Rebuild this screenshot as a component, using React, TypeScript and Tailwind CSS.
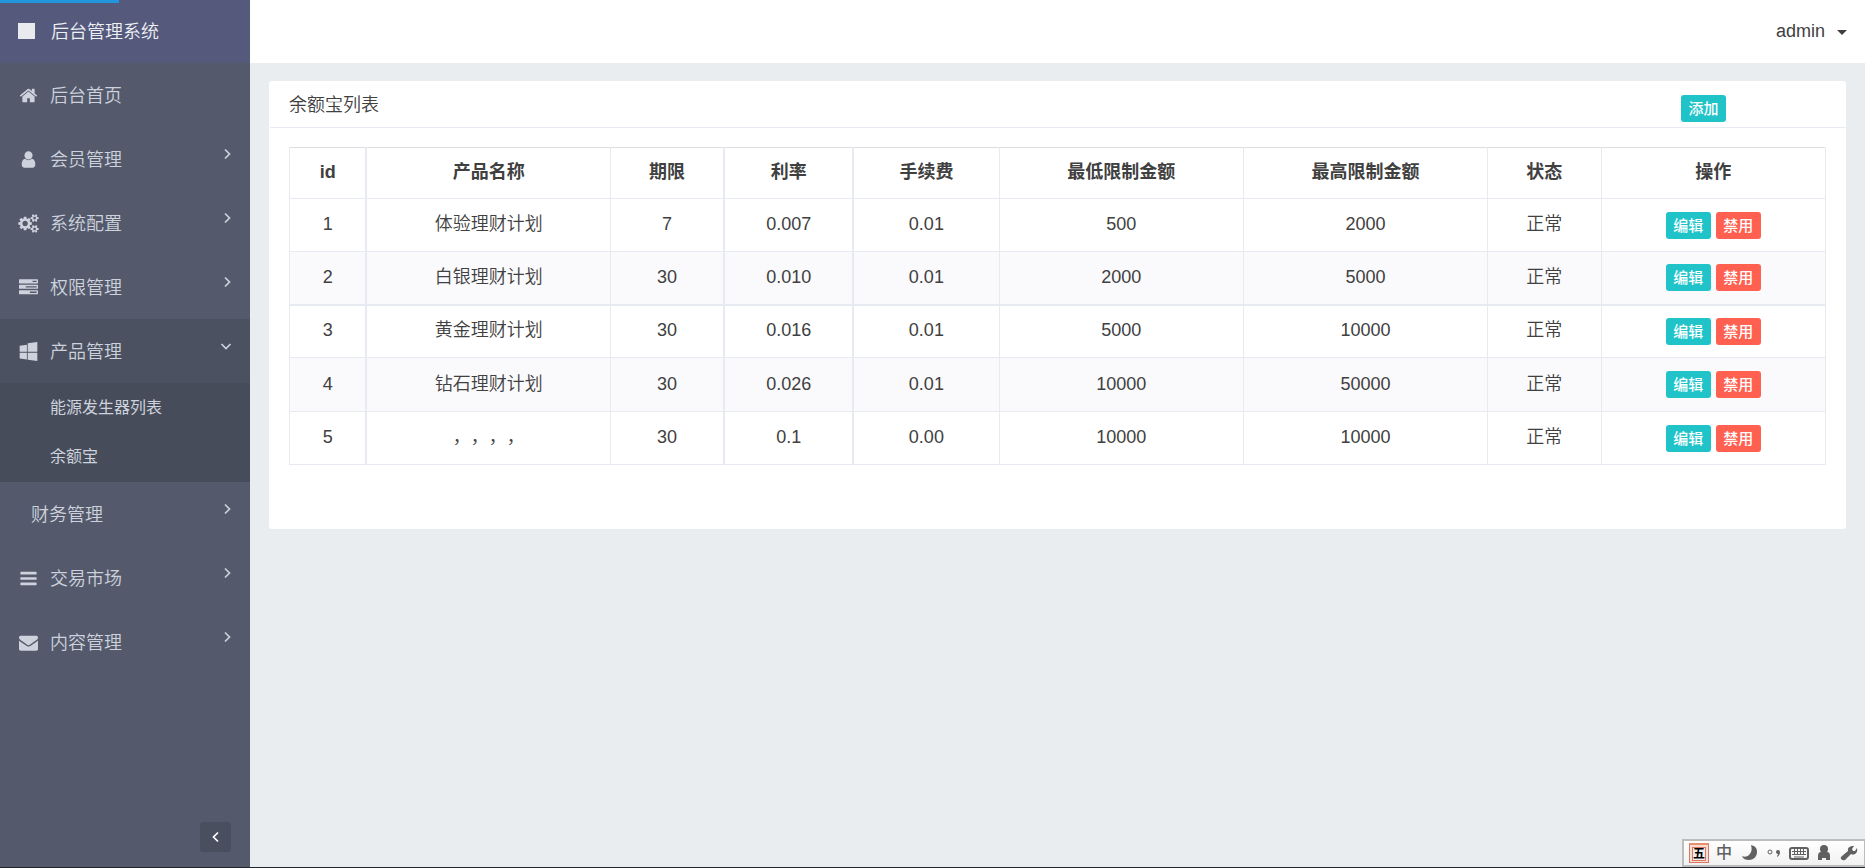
import React, { useState } from "react";

const ICONS = {
  home: "M1472 992v480q0 26-19 45t-45 19h-384v-384h-256v384h-384q-26 0-45-19t-19-45v-480q0-1 .5-3t.5-3l575-474 575 474q1 2 1 6zm223-69l-62 74q-8 9-21 11h-3q-13 0-21-7l-692-577-692 577q-12 8-24 7-13-2-21-11l-62-74q-8-10-7-23.5t11-21.5l719-599q32-26 76-26t76 26l244 204v-195q0-14 9-23t23-9h192q14 0 23 9t9 23v408l219 182q10 8 11 21.5t-7 23.5z",
  user: "M1536 1399q0 109-62.5 187t-150.5 78h-854q-88 0-150.5-78t-62.5-187q0-85 8.5-160.5t31.5-152 58.5-131 94-89 134.5-34.5q131 128 313 128t313-128q76 0 134.5 34.5t94 89 58.5 131 31.5 152 8.5 160.5zm-256-887q0 159-112.5 271.5t-271.5 112.5-271.5-112.5-112.5-271.5 112.5-271.5 271.5-112.5 271.5 112.5 112.5 271.5z",
  cogs: "M832 896q0-106-75-181t-181-75-181 75-75 181 75 181 181 75 181-75 75-181zm768 512q0-52-38-90t-90-38-90 38-38 90q0 53 37.5 90.5t90.5 37.5 90.5-37.5 37.5-90.5zm0-1024q0-52-38-90t-90-38-90 38-38 90q0 53 37.5 90.5t90.5 37.5 90.5-37.5 37.5-90.5zm-384 421v185q0 10-7 19.5t-16 10.5l-155 24q-11 35-32 76 34 48 90 115 7 11 7 20 0 12-7 19-23 30-82.5 89.5t-78.5 59.5q-11 0-21-7l-115-90q-37 19-77 31-11 108-23 155-7 24-30 24h-186q-11 0-20-7.5t-10-17.5l-23-153q-34-10-75-31l-118 89q-7 7-20 7-11 0-21-8-144-133-144-160 0-9 7-19 10-14 41-53t47-61q-23-44-35-82l-152-24q-10-1-17-9.5t-7-19.5v-185q0-10 7-19.5t16-10.5l155-24q11-35 32-76-34-48-90-115-7-11-7-20 0-12 7-20 22-30 82-89t79-59q11 0 21 7l115 90q34-18 77-32 11-108 23-154 7-24 30-24h186q11 0 20 7.5t10 17.5l23 153q34 10 75 31l118-89q8-7 20-7 11 0 21 8 144 133 144 160 0 8-7 19-12 16-42 54t-45 60q23 48 34 82l152 23q10 2 17 10.5t7 19.5zm640 533v140q0 16-149 31-12 27-30 52 51 113 51 138 0 4-4 7-122 71-124 71-8 0-46-47t-52-68q-20 2-30 2t-30-2q-14 21-52 68t-46 47q-2 0-124-71-4-3-4-7 0-25 51-138-18-25-30-52-149-15-149-31v-140q0-16 149-31 13-29 30-52-51-113-51-138 0-4 4-7 4-2 35-20t59-34 30-16q8 0 46 46.5t52 67.5q20-2 30-2t30 2q51-71 92-112l6-2q4 0 124 70 4 3 4 7 0 25-51 138 17 23 30 52 149 15 149 31zm0-1024v140q0 16-149 31-12 27-30 52 51 113 51 138 0 4-4 7-122 71-124 71-8 0-46-47t-52-68q-20 2-30 2t-30-2q-14 21-52 68t-46 47q-2 0-124-71-4-3-4-7 0-25 51-138-18-25-30-52-149-15-149-31v-140q0-16 149-31 13-29 30-52-51-113-51-138 0-4 4-7 4-2 35-20t59-34 30-16q8 0 46 46.5t52 67.5q20-2 30-2t30 2q51-71 92-112l6-2q4 0 124 70 4 3 4 7 0 25-51 138 17 23 30 52 149 15 149 31z",
  tasks: "M1024 1408h640v-128h-640v128zm-384-512h1024v-128h-1024v128zm640-512h384v-128h-384v128zm512 832v256q0 26-19 45t-45 19h-1664q-26 0-45-19t-19-45v-256q0-26 19-45t45-19h1664q26 0 45 19t19 45zm0-512v256q0 26-19 45t-45 19h-1664q-26 0-45-19t-19-45v-256q0-26 19-45t45-19h1664q26 0 45 19t19 45zm0-512v256q0 26-19 45t-45 19h-1664q-26 0-45-19t-19-45v-256q0-26 19-45t45-19h1664q26 0 45 19t19 45z",
  windows: "M746 1006v651l-682-94v-557h682zm0-743v659h-682v-565zm982 743v786l-907-125v-661h907zm0-1006v922h-907v-797z",
  bars: "M1664 1344v128q0 26-19 45t-45 19h-1408q-26 0-45-19t-19-45v-128q0-26 19-45t45-19h1408q26 0 45 19t19 45zm0-512v128q0 26-19 45t-45 19h-1408q-26 0-45-19t-19-45v-128q0-26 19-45t45-19h1408q26 0 45 19t19 45zm0-512v128q0 26-19 45t-45 19h-1408q-26 0-45-19t-19-45v-128q0-26 19-45t45-19h1408q26 0 45 19t19 45z",
  envelope: "M1792 710v794q0 66-47 113t-113 47h-1472q-66 0-113-47t-47-113v-794q44 49 101 87 362 246 497 345 57 42 92.5 65.5t94.5 48 110 24.5h2q51 0 110-24.5t94.5-48 92.5-65.5q170-123 498-345 57-39 100-87zm0-294q0 79-49 151t-122 123q-376 261-468 325-10 7-42.5 31t-54 38.5-52 32.5-57.5 27-50 9h-2q-23 0-50-9t-57.5-27-52-32.5-54-38.5-42.5-31q-91-64-262-182.5t-205-142.5q-62-42-117-115.5t-55-136.5q0-78 41.5-130t118.5-52h1472q65 0 112.5 47t47.5 113z",
};

type IconName = keyof typeof ICONS;

type MenuItem = {
  label: string;
  icon?: IconName;
  link?: boolean;
  children?: string[];
};

const menu: MenuItem[] = [
  { label: "后台首页", icon: "home", link: true },
  { label: "会员管理", icon: "user" },
  { label: "系统配置", icon: "cogs" },
  { label: "权限管理", icon: "tasks" },
  {
    label: "产品管理",
    icon: "windows",
    children: ["能源发生器列表", "余额宝"],
  },
  { label: "财务管理" },
  { label: "交易市场", icon: "bars" },
  { label: "内容管理", icon: "envelope" },
];

const columns = [
  { title: "id", style: "w-[5%] border-r-2" },
  { title: "产品名称", style: "w-[15.9%]" },
  { title: "期限", style: "w-[7.4%] border-r-2" },
  { title: "利率", style: "w-[8.4%] border-r-2" },
  { title: "手续费", style: "w-[9.5%]" },
  { title: "最低限制金额", style: "w-[15.9%]" },
  { title: "最高限制金额", style: "w-[15.9%]" },
  { title: "状态", style: "w-[7.4%]" },
  { title: "操作", style: "w-[14.6%]" },
];

const products = [
  ["1", "体验理财计划", "7", "0.007", "0.01", "500", "2000", "正常"],
  ["2", "白银理财计划", "30", "0.010", "0.01", "2000", "5000", "正常"],
  ["3", "黄金理财计划", "30", "0.016", "0.01", "5000", "10000", "正常"],
  ["4", "钻石理财计划", "30", "0.026", "0.01", "10000", "50000", "正常"],
  ["5", "，，，，", "30", "0.1", "0.00", "10000", "10000", "正常"],
];

function Icon({ name }: { name: IconName }) {
  return (
    <svg
      viewBox="0 0 1792 1792"
      className="h-[19px] w-[19px] shrink-0 overflow-visible"
      fill="currentColor"
      aria-hidden="true"
    >
      <path d={ICONS[name]} />
    </svg>
  );
}

function Angle({ dir }: { dir: "left" | "right" | "down" }) {
  const points = {
    left: "8,1.500 3.500,6 8,10.500",
    right: "5,1.500 9.500,6 5,10.500",
    down: "1.500,4 6,8.500 10.500,4",
  };
  return (
    <svg
      viewBox="0 0 12 12"
      className="h-3 w-3"
      fill="none"
      stroke="currentColor"
      strokeWidth="1.700"
      aria-hidden="true"
    >
      <polyline points={points[dir]} />
    </svg>
  );
}

function SmallButton({ label, danger }: { label: string; danger?: boolean }) {
  return (
    <button
      type="button"
      className={`h-[27px] w-[45px] rounded-[3px] text-[15px] leading-[27px] font-medium text-white ${
        danger ? "bg-[#ff6050]" : "bg-[#1fc3c8]"
      }`}
    >
      {label}
    </button>
  );
}

function Sidebar() {
  const [open, setOpen] = useState("产品管理");

  return (
    <aside className="flex w-[250px] shrink-0 flex-col bg-[#545a6c] text-[#cdd2dc]">
      <div className="h-[63px] bg-[#555a7c]">
        {/* Page loading progress */}
        <div className="h-[3px] w-[119px] bg-[#2196dc]"></div>
        <a
          href="#"
          className="flex h-14 items-center gap-4 pl-[18px] text-lg text-[#eef0f4]"
        >
          <span className="h-4 w-[17px] bg-[#e9eaee]"></span>
          <span className="pt-0.5">后台管理系统</span>
        </a>
      </div>

      <nav>
        <ul>
          {menu.map((item) => {
            const isOpen = open === item.label && !!item.children;
            const rowClass = `flex h-16 w-full items-center gap-3 pr-[18px] text-lg ${
              item.icon ? "pl-[19px]" : "pl-[31px]"
            } ${isOpen ? "bg-[#4c5161]" : ""}`;
            return (
              <li key={item.label}>
                {item.link ? (
                  <a href="#" className={rowClass}>
                    {item.icon && <Icon name={item.icon} />}
                    <span className="pt-0.5">{item.label}</span>
                  </a>
                ) : (
                  <button
                    type="button"
                    aria-expanded={isOpen}
                    onClick={() => setOpen(isOpen ? "" : item.label)}
                    className={rowClass}
                  >
                    {item.icon && <Icon name={item.icon} />}
                    <span className="pt-0.5">{item.label}</span>
                    <span className="mb-2.5 ml-auto">
                      <Angle dir={isOpen ? "down" : "right"} />
                    </span>
                  </button>
                )}
                {isOpen && (
                  <ul className="bg-[#474c5b] pb-px">
                    {item.children?.map((child) => (
                      <li key={child}>
                        <a
                          href="#"
                          className="flex h-[49px] items-center pl-[50px] text-base font-normal"
                        >
                          {child}
                        </a>
                      </li>
                    ))}
                  </ul>
                )}
              </li>
            );
          })}
        </ul>
      </nav>

      <button
        type="button"
        aria-label="收起菜单"
        className="mt-auto mr-[19px] mb-[15px] flex h-[30px] w-[31px] items-center justify-center self-end rounded-[3px] bg-[#4a4f60] text-white"
      >
        <Angle dir="left" />
      </button>
    </aside>
  );
}

function ProductTable() {
  return (
    <table className="w-full table-fixed border-collapse border border-[#e7ebf1] text-center text-lg">
      <thead>
        <tr className="h-[51px] border-t border-t-[#dcdee2]">
          {columns.map((column) => (
            <th
              key={column.title}
              className={`border-x border-b border-[#e7ebf1] pb-0.5 font-bold ${column.style}`}
            >
              {column.title}
            </th>
          ))}
        </tr>
      </thead>
      <tbody>
        {products.map((row) => (
          <tr
            key={row[0]}
            className="h-[53px] even:bg-[#fafafc] nth-[2]:border-b-2 nth-[2]:border-[#e7ebf1] nth-[4]:h-[54px]"
          >
            {row.map((cell, index) => (
              <td
                key={index}
                className={`border border-[#e7ebf1] pb-0.5 [text-spacing-trim:space-all] ${
                  columns[index].style
                }`}
              >
                {cell}
              </td>
            ))}
            <td className="border border-[#e7ebf1]">
              <div className="flex justify-center gap-[5px]">
                <SmallButton label="编辑" />
                <SmallButton label="禁用" danger />
              </div>
            </td>
          </tr>
        ))}
      </tbody>
    </table>
  );
}

// Floating input method toolbar
function InputBar() {
  return (
    <div className="fixed right-0 bottom-px flex h-7 items-center gap-[5px] border-2 border-r border-[#bdbdbd] bg-gradient-to-b from-white to-[#f1f1f1] px-[5px] text-[#606060]">
      <div className="flex h-5 w-5 items-center justify-center border border-t-2 border-[#dc7662] border-t-[#ea8e6c] bg-[#f8ddd3]">
        <span className="flex h-3.5 w-3.5 items-center justify-center border border-[#dc7662] bg-[#eeeeee] text-xs font-bold text-black">
          五
        </span>
      </div>
      <span className="w-5 text-center text-base leading-5 font-medium">
        中
      </span>
      <svg viewBox="0 0 18 18" className="h-[18px] w-5" fill="currentColor">
        <path d="M11 1c4 1 6 3 6 7 0 5-4 8-8 8-3 0-6-1-7-4 2 1 5 1 7-1 3-3 3-6 2-10z" />
      </svg>
      <svg viewBox="0 0 18 18" className="h-[18px] w-5" fill="currentColor">
        <circle cx="5" cy="8" r="2" fill="none" stroke="currentColor" />
        <path d="M11 8a2 2 0 1 1 4 0c0 2-1 4-3 5v-1q1-1 1-2a2 2 0 0 1-2-2z" />
      </svg>
      <svg
        viewBox="0 0 20 18"
        className="h-[18px] w-5"
        fill="none"
        stroke="currentColor"
      >
        <rect x="1" y="4" width="18" height="11" rx="2" strokeWidth="2" />
        <path d="M3 7.500h14M3 10.500h14M5 13h10M5.500 5v6M8.500 5v6M11.500 5v6M14.500 5v6" />
      </svg>
      <svg viewBox="0 0 18 18" className="h-[18px] w-5" fill="currentColor">
        <circle cx="9" cy="5" r="4" />
        <path d="M3 16v-4q0-4 3-4h6q3 0 3 4v4h-4v-2h-4v2z" />
      </svg>
      <svg viewBox="0 0 18 18" className="h-[18px] w-5" fill="currentColor">
        <path d="M12 2l2 0-2 3 1 2 2 0 2-3q1 4-2 6-2 1-4 0l-6 6q-2 1-4-1-1-2 1-3l6-5q-1-4 4-5z" />
      </svg>
    </div>
  );
}

function App() {
  return (
    <div className="flex min-h-screen border-b border-[#22252b] bg-[#e9edf0] font-['Liberation_Sans','Noto_Sans_CJK_SC',sans-serif] font-[350] text-[#404040]">
      <Sidebar />

      <div className="min-w-0 flex-1">
        <header className="flex h-[63px] items-center justify-end bg-white pr-[18px] pb-0.5">
          <button type="button" className="flex items-center gap-3 text-lg">
            admin
            <svg
              viewBox="0 0 10 5"
              className="mt-1 h-[5px] w-2.5"
              fill="currentColor"
            >
              <path d="M0 0h10l-5 5z" />
            </svg>
          </button>
        </header>

        <main className="px-[19px] py-[18px]">
          <section className="rounded-[3px] bg-white">
            <div className="mx-px flex h-[47px] items-center justify-between border-b border-[#e7ebf1] pr-[119px] pl-[19px]">
              <h1 className="pt-0.5 text-lg font-[350]">余额宝列表</h1>
              <div className="pt-2">
                <SmallButton label="添加" />
              </div>
            </div>
            <div className="px-5 pt-[19px] pb-16">
              <ProductTable />
            </div>
          </section>
        </main>
      </div>

      <InputBar />
    </div>
  );
}

export default App;
